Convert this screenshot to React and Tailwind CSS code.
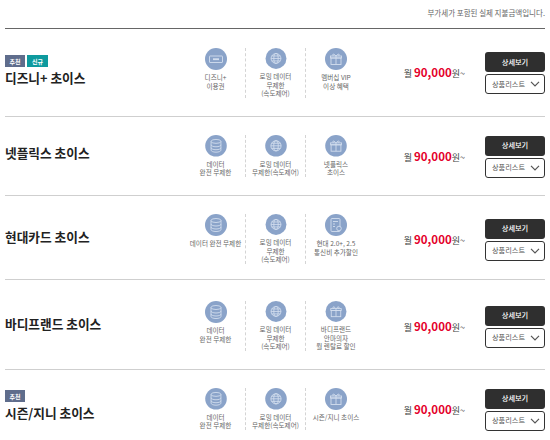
const F = '"Noto Sans CJK KR","Noto Sans",sans-serif';

function Disc({ kind }) {
  return (
    <svg width="22" height="22" viewBox="0 0 22 22" className="block">
      <circle cx="11" cy="11" r="11" fill="#8aa3c9" />
      <g fill="none" stroke="#d3deee" strokeWidth="0.9">
        {kind === 'ticket' && (
          <>
            <rect x="4.5" y="8" width="13" height="6.500" rx="0.5" />
            <path d="M8 11.200h6" strokeWidth="1.800" />
          </>
        )}
        {kind === 'globe' && (
          <>
            <circle cx="11" cy="11" r="5.200" />
            <ellipse cx="11" cy="11" rx="2.300" ry="5.200" />
            <path d="M5.800 11h10.400M6.500 8.400h9M6.500 13.600h9" />
          </>
        )}
        {kind === 'gift' && (
          <>
            <rect x="6" y="10" width="10" height="6.500" />
            <rect x="5.500" y="8" width="11" height="2" />
            <path d="M11 8v8.500M8.500 8c-1.800-1.800 0-3 2.500 0 2.500-3 4.300-1.800 2.500 0" />
          </>
        )}
        {kind === 'db' && (
          <>
            <ellipse cx="11" cy="6.500" rx="5" ry="2" />
            <path d="M6 6.500v9c0 1 2 2 5 2s5-1 5-2v-9M6 10c0 1 2 2 5 2s5-1 5-2M6 13c0 1 2 2 5 2s5-1 5-2" />
          </>
        )}
        {kind === 'card' && (
          <>
            <rect x="6" y="4.500" width="9" height="13" rx="1" />
            <path d="M8 7.500h5M8 10h2M8 12.500h2" />
            <circle cx="14" cy="14.500" r="2.300" fill="#8aa3c9" />
          </>
        )}
      </g>
    </svg>
  );
}

function Feature({ kind, lines, divider }) {
  return (
    <div className={`w-[60px] shrink-0 flex flex-col items-center ${divider ? 'border-r border-dashed border-[#d4d4d4]' : ''}`}>
      <Disc kind={kind} />
      <div className="mt-[3px] text-center text-[6.6px] leading-[8.7px] text-[#666] whitespace-nowrap">
        {lines.map((l) => (
          <div key={l}>{l}</div>
        ))}
      </div>
    </div>
  );
}

function Row({ height, top, title, tags, leftPad, rightPad, features, featureHeight }) {
  return (
    <div className={`relative flex items-start ${height}`}>
      <div className={`w-[186px] shrink-0 pl-[5px] self-stretch flex flex-col justify-center ${leftPad}`}>
        {tags && (
          <div className="flex gap-[2px] mb-[1px]">
            {tags.map((t) => (
              <span
                key={t}
                className={`h-[12px] flex items-center justify-center text-[6px] font-bold text-white ${t === '신규' ? 'bg-[#0e9a9e] w-[21px]' : 'bg-[#5f6d8c] w-[20px]'}`}
              >
                {t}
              </span>
            ))}
          </div>
        )}
        <div className="text-[12.7px] leading-[20px] font-bold text-[#222]">{title}</div>
      </div>
      <div className={`flex self-start ${top}`}>
        {features.map((f, i) => (
          <div key={i} className={`flex ${featureHeight}`}>
            <Feature {...f} divider={i < 2} />
          </div>
        ))}
      </div>
      <div className={`absolute right-[5px] top-0 bottom-0 flex items-center ${rightPad}`}>
        <div className="flex items-baseline mr-[20px] text-[9px] text-[#444]">
          <span>월&nbsp;</span>
          <span className="text-[11.5px] font-bold text-[#e4002b]">90,000</span>
          <span>원~</span>
        </div>
        <div className="w-[60px] flex flex-col gap-[2px]">
          <div className="h-[20px] rounded-[3px] bg-[#2f2f2f] text-white text-[7.2px] font-medium flex items-center justify-center">상세보기</div>
          <div className="h-[20px] rounded-[3px] border border-[#333] bg-white text-[#555] text-[7.2px] flex items-center justify-between pl-[6px] pr-[4px]">
            <span>상품리스트</span>
            <svg width="10" height="6" viewBox="0 0 10 6" fill="none" stroke="#555" strokeWidth="1.200">
              <path d="M1 .8l4 4 4-4" />
            </svg>
          </div>
        </div>
      </div>
    </div>
  );
}

const roam3 = { kind: 'globe', lines: ['로밍 데이터', '무제한', '(속도제어)'] };
const roam2 = { kind: 'globe', lines: ['로밍 데이터', '무제한(속도제어)'] };

const rows = [
  { height: 'h-[88px]', top: 'pt-[19px]', leftPad: 'pb-[3px]', rightPad: '', featureHeight: 'h-[50px]', title: '디즈니+ 초이스', tags: ['추천', '신규'], features: [
    { kind: 'ticket', lines: ['디즈니+', '이용권'] }, roam3, { kind: 'gift', lines: ['멤버십 VIP', '이상 혜택'] } ] },
  { height: 'h-[79px]', top: 'pt-[18px]', leftPad: 'pb-[8px]', rightPad: '', featureHeight: 'h-[42px]', title: '넷플릭스 초이스', features: [
    { kind: 'db', lines: ['데이터', '완전 무제한'] }, roam2, { kind: 'gift', lines: ['넷플릭스', '초이스'] } ] },
  { height: 'h-[84px]', top: 'pt-[18px]', leftPad: 'pb-[2px]', rightPad: 'pt-[3px]', featureHeight: 'h-[50px]', title: '현대카드 초이스', features: [
    { kind: 'db', lines: ['데이터 완전 무제한'] }, roam3, { kind: 'card', lines: ['현대 2.0+, 2.5', '통신비 추가할인'] } ] },
  { height: 'h-[90px]', top: 'pt-[21px]', leftPad: 'pb-[2px]', rightPad: 'pt-[3px]', featureHeight: 'h-[50px]', title: '바디프랜드 초이스', features: [
    { kind: 'db', lines: ['데이터', '완전 무제한'] }, roam3, { kind: 'gift', lines: ['바디프랜드', '안마의자', '월 렌탈료 할인'] } ] },
  { height: 'h-[71px]', top: 'pt-[18px]', leftPad: 'pt-[2px]', rightPad: 'pt-[8px]', featureHeight: 'h-[42px]', title: '시즌/지니 초이스', tags: ['추천'], last: true, features: [
    { kind: 'db', lines: ['데이터', '완전 무제한'] }, roam2, { kind: 'gift', lines: ['시즌/지니 초이스'] } ] },
];

export default function App() {
  return (
    <div className="w-[550px] h-[440px] overflow-hidden bg-white" style={{ fontFamily: F }}>
      <div className="h-[29px] ml-[5px] mr-[5px] border-b border-[#666] flex items-center justify-end pb-[3px] text-[7.5px] text-[#666]">
        부가세가 포함된 실제 지불금액입니다.
      </div>
      <div>
        {rows.map((r) => (
          <div key={r.title} className="relative">
            <Row {...r} />
            {!r.last && <div className="mx-[5px] h-px bg-[#cfcfcf] -mt-px relative" />}
          </div>
        ))}
      </div>
    </div>
  );
}
